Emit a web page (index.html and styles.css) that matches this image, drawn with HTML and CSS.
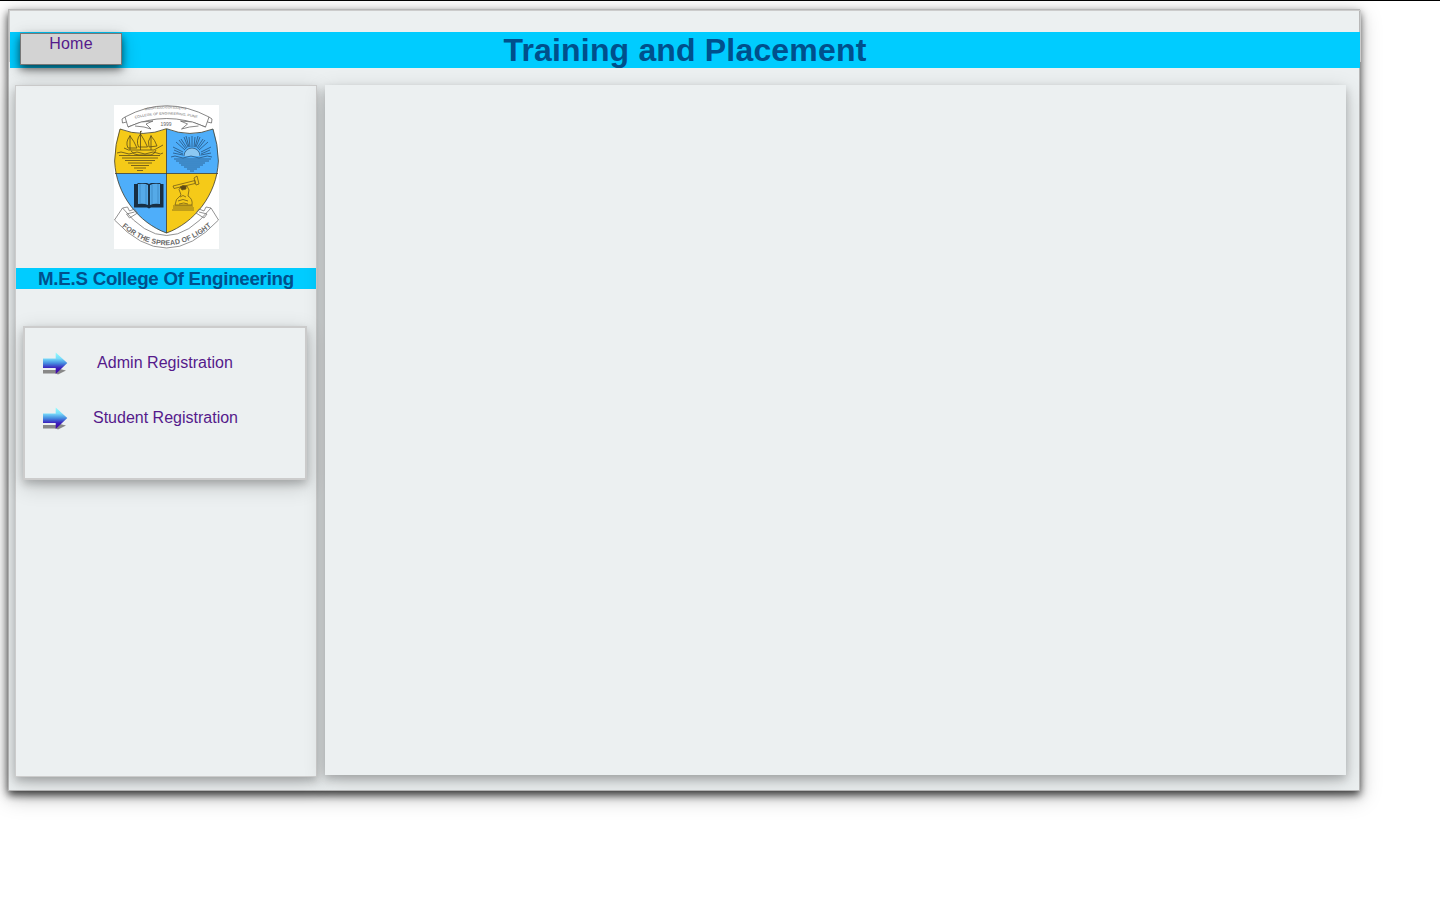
FILE: index.html
```html
<!DOCTYPE html>
<html lang="en">
<head>
<meta charset="utf-8">
<title>Training and Placement</title>
<link rel="stylesheet" href="styles.css">
</head>
<body>
<div class="page">
  <header class="header">
    <h1 class="title">Training and Placement</h1>
    <a class="home" href="#">Home</a>
  </header>
  <div class="columns">
    <aside class="sidebar">
      <svg class="crest" viewBox="0 0 105 144" width="105" height="144">
        <defs>
          <clipPath id="shield"><path d="M6 24Q29 33 52.5 23.7Q76 33 99 24Q104 39 104.4 56C103 90 80 118 52.5 128C25 118 2 90 .6 56Q1 39 6 24Z"/></clipPath>
          <path id="motto" d="M8 121.500Q52.500 159.500 98 120.500"/>
          <path id="arcA" d="M31 5.500Q52.500 1.500 74 5.500"/>
          <path id="arcB" d="M21 13.500Q52.500 5.500 85 13.500"/>
        </defs>
        <rect width="105" height="144" fill="#fff"/>
        <g fill="#fff" stroke="#555" stroke-width=".7">
          <path d="M11 12Q52.5-10.5 95 12L91.5 22Q52.5 5 14 22Z"/>
          <path d="M11 12l-3 2 .5 4 4-1M95 12l3 2-.5 4-4-1" fill="none"/>
          <path d="M14 22l13-5 12-1-7 3 5 5-7-2-9-1M91.500 22l-13-5-12-1 7 3-6 5 8-2 9-1"/>
        </g>
        <g class="crest-name"><text><textPath href="#arcA" textLength="41" lengthAdjust="spacingAndGlyphs">MODERN EDUCATION SOCIETY'S</textPath></text>
        <text><textPath href="#arcB" textLength="63" lengthAdjust="spacingAndGlyphs">COLLEGE OF ENGINEERING, PUNE</textPath></text>
        <text class="year" x="46.500" y="20.500">1999</text></g>
        <g clip-path="url(#shield)">
          <path fill="#f5ca18" d="M0 20h52.5v48.5H0zM52.5 68.5H105V130H52.5z"/>
          <path fill="#4eaefa" d="M52.5 20H105v48.5H52.5zM0 68.5h52.5V130H0z"/>
        </g>
        <g fill="none" stroke="#514319" stroke-width=".75">
          <path d="M10 43q4 3 10 2h20l9-5M17 46q3 4 8 4h12q4-1 5-5M16 45V30M26.5 45V26M37 45V30M16 31q-5 6-2 12l9 0q-3-7-7-12M26.5 29q-5 6-2 13l9 0q-3-7-7-13M37 31q-4 5-2 11l8-1q-2-6-6-10M26 27l2-1"/>
          <path d="M3 48q4-2 8 0t8 0 8 0 8 0 8 0 6 0M5 50.5h41M8 53h36M11 55.5h30M14 58h24M17 60.5h18M20 63h12M23 65.5h6"/>
        </g>
        <g fill="none" stroke="#244e76" stroke-width=".75">
          <path fill="#8cc8f2" d="M70 51a8 8 0 0 1 16 0"/>
          <path d="M69 50l-10-2M69 47l-10-5M71 45l-9-8M73 43l-6-9M75 42l-3-11M78 42V31M81 42l3-11M83 43l6-9M85 45l9-8M87 47l10-5M87 50l10-2M72 44l-7-9M74 42l-4-10M76 42l-1-10M80 42l1-10M82 42l4-10M84 44l7-9M69 49l-9-4M87 49l9-4"/>
          <path d="M57 52q4-2 8 0t8 0 8 0 8 0 9 0M60 54h37M62 56h33M65 58h26M67 60h22M70 62h16M73 64h10M76 66h4"/>
        </g>
        <path fill="#182f43" d="M20 79h3l1-1h9l2 1 2-1h9l1 1h2.5v23.500H37l-2 1-2-1H20z"/>
        <path fill="#55aae8" d="M24 79q7-1 10 1v20q-4-2-10-1zM36 80q4-2 10-1v20q-6-1-10 1z"/>
        <path d="M26 79v20M44 79v20M32 80v19M38 80v19" stroke="#337eb5" stroke-width=".6"/>
        <g fill="none" stroke="#6b5719" stroke-width=".75">
          <path d="M59 81l1 2.500 21-5v-3zM80 73l3-2 2 8-3 1zM66 83q-2 1 0 4l1 3q-6 4-6 10h17q1-6-4-9l1-6-2-4-3 1-2-1z"/>
          <path d="M59 101h20M59 103h21M58 105h22M66 92q3-3 6 0M64 96q5-3 10 0M65 99q5-2 9 0"/>
          <path d="M66 82l3-1.500 3 .5v3l-4 1z" fill="#5d4914"/>
        </g>
        <path d="M6 24Q29 33 52.5 23.7Q76 33 99 24Q104 39 104.4 56C103 90 80 118 52.5 128C25 118 2 90 .6 56Q1 39 6 24ZM52.5 24v104M1 68.5h103" fill="none" stroke="#3d3b2a" stroke-width=".8"/>
        <g fill="#fff" stroke="#777" stroke-width=".8">
          <path d="M8.5 103Q52.5 158 97 103L104.500 115Q52.500 171 .5 115Z"/>
          <path d="M8.5 103l5-1 2 4 5-2 3 4-8 5-3-4 8-2M97 103l-5-1-2 4-5-2-3 4 8 5 3-4-8-2" fill="none"/>
        </g>
        <text class="motto"><textPath href="#motto" textLength="99">FOR THE SPREAD OF LIGHT</textPath></text>
      </svg>
      <h3 class="college">M.E.S College Of Engineering</h3>
      <nav class="menu">
        <div class="menu-row">
          <svg class="arrow" viewBox="0 0 27 26" width="27" height="26">
            <defs>
              <linearGradient id="arrowFill" x1="0" y1="0" x2="0" y2="1"><stop stop-color="#8fffff"/><stop offset=".28" stop-color="#78dcfa"/><stop offset=".5" stop-color="#458be0"/><stop offset=".72" stop-color="#3c20bc"/><stop offset="1" stop-color="#4500a0"/></linearGradient>
              <filter id="soft"><feGaussianBlur stdDeviation=".6"/></filter>
            </defs>
            <path d="M1 19h13v-2l10 2.500-8 4-2-1H1z" fill="#888" filter="url(#soft)"/>
            <path d="M1 7.5h12.7V1.5L25.3 12 13.7 23v-6H1z" fill="url(#arrowFill)"/>
          </svg>
          <a class="admin" href="#">Admin Registration</a>
        </div>
        <div class="menu-row">
          <svg class="arrow" viewBox="0 0 27 26" width="27" height="26">
            <path d="M1 19h13v-2l10 2.500-8 4-2-1H1z" fill="#888" filter="url(#soft)"/>
            <path d="M1 7.5h12.7V1.5L25.3 12 13.7 23v-6H1z" fill="url(#arrowFill)"/>
          </svg>
          <a href="#">Student Registration</a>
        </div>
      </nav>
    </aside>
    <main class="content"></main>
  </div>
</div>
</body>
</html>
```

FILE: styles.css
```css
* { box-sizing: border-box; }
html { background: #fff; }
body {
  margin: 0;
  min-height: 900px;
  padding: 8px;
  border-top: 1px solid #000;
  font: 16px/18px "Liberation Sans", Arial, sans-serif;
}
a { color: #551a8b; text-decoration: none; }
.page {
  width: 1352px;
  height: 782px;
  border: 1px solid #b8b8b8;
  background: #ecf0f1;
  box-shadow: 0 4px 8px rgba(0, 0, 0, .72), 0 6px 20px rgba(0, 0, 0, .25);
}
.header {
  position: relative;
  width: 1352px;
  height: 52px;
  padding-top: 21px;
  border: 1px solid #ccc;
}
.title {
  margin: 0;
  height: 36px;
  background: #0cf;
  color: #00508c;
  font-size: 32px;
  line-height: 36px;
  letter-spacing: .17px;
  text-align: center;
}
.home {
  position: absolute;
  left: 10px;
  top: 22px;
  width: 102px;
  height: 32px;
  border: 1px solid #777;
  background: #d3d3d3;
  line-height: 20px;
  letter-spacing: .2px;
  text-align: center;
  box-shadow: 0 4px 8px rgba(0, 0, 0, .6), 0 6px 20px rgba(0, 0, 0, .19);
}
.columns {
  display: flex;
  align-items: flex-start;
  gap: 8px;
  padding: 23px 0 0 6px;
}
.sidebar {
  width: 302px;
  height: 692px;
  padding-top: 19px;
  border: 1px solid #ccc;
  background: #ecf0f1;
  box-shadow: 0 4px 8px rgba(0, 0, 0, .2), 0 6px 20px rgba(0, 0, 0, .19);
}
.content {
  width: 1021px;
  height: 690px;
  background: #ecf0f1;
  box-shadow: 0 4px 8px rgba(0, 0, 0, .2), 0 6px 20px rgba(0, 0, 0, .19);
}
.crest { display: block; margin: 0 auto 19px 98px; }
.crest text { font-family: "Liberation Sans", Arial, sans-serif; fill: #666; }
.crest-name text { font-size: 3.4px; }
.crest-name .year { font-size: 5px; }
.crest .motto { font-size: 7px; font-weight: bold; }
.college {
  margin: 0;
  height: 21px;
  background: #0cf;
  color: #00508c;
  font-size: 18.72px;
  line-height: 21px;
  letter-spacing: -.25px;
  text-align: center;
}
.menu {
  width: 284px;
  height: 154px;
  margin: 37px 0 0 7px;
  padding: 23px 0 0 17px;
  border: 2px solid #ccc;
  box-shadow: 0 4px 8px rgba(0, 0, 0, .2), 0 6px 20px rgba(0, 0, 0, .19);
}
.menu-row { display: flex; height: 55px; }
.menu-row a { width: 193px; padding-top: 3px; text-align: center; }
.menu-row .admin { width: 192px; letter-spacing: .04px; }
.arrow { flex: none; }
```
